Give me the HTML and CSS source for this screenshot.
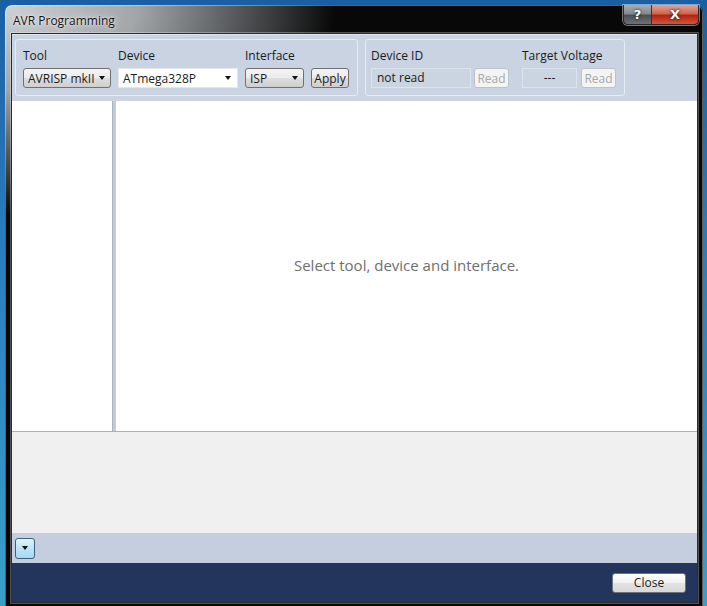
FILE: index.html
```html
<!DOCTYPE html>
<html lang="en">
<head>
  <meta charset="utf-8">
  <title>AVR Programming</title>
  <link rel="stylesheet" href="styles.css">
</head>
<body>
  <div class="window">
    <div class="titlebar">
      <span class="caption">AVR Programming</span>
      <div class="caption-buttons">
        <span class="cap-btn help">?</span>
        <span class="cap-btn close">X</span>
      </div>
    </div>
    <div class="client">
      <div class="toolbar">
        <div class="group">
          <div class="field">
            <label>Tool</label>
            <div class="combo gray tool-combo"><span>AVRISP mkII</span><i class="arrow"></i></div>
          </div>
          <div class="field">
            <label>Device</label>
            <div class="combo white device-combo"><span>ATmega328P</span><i class="arrow"></i></div>
          </div>
          <div class="field">
            <label>Interface</label>
            <div class="combo gray iface-combo"><span>ISP</span><i class="arrow"></i></div>
          </div>
          <div class="field end">
            <button type="button" class="btn apply">Apply</button>
          </div>
        </div>
        <div class="group">
          <div class="field">
            <label>Device ID</label>
            <div class="row">
              <div class="readout id-box">not read</div>
              <button type="button" class="btn disabled">Read</button>
            </div>
          </div>
          <div class="field voltage">
            <label>Target Voltage</label>
            <div class="row">
              <div class="readout volt-box">---</div>
              <button type="button" class="btn disabled">Read</button>
            </div>
          </div>
        </div>
      </div>
      <div class="main">
        <div class="sidebar"></div>
        <div class="splitter"></div>
        <div class="content">Select tool, device and interface.</div>
      </div>
      <div class="output"></div>
      <div class="expander">
        <span class="expand-btn"><i class="arrow"></i></span>
      </div>
      <div class="footer">
        <button type="button" class="btn close-btn">Close</button>
      </div>
    </div>
  </div>
</body>
</html>
```

FILE: styles.css
```css
html, body
{
  margin: 0;
  height: 100%;
}
body
{
  background: linear-gradient(180deg, #1b5fa3 0%, #2a7dbd 40%, #3a9fc8 100%);
  padding: 5px 4px 3px 5px;
  box-sizing: border-box;
  font-family: "Open Sans", "Noto Sans", sans-serif;
  font-size: 11.5px;
  color: #1b1b1b;
}
.window
{
  height: 598px;
  display: flex;
  flex-direction: column;
  border-radius: 7px 7px 3px 3px;
  background:
    radial-gradient(330px 210px at 0 0, #cfd2d4 0%, #a3a6a9 40%, #3d3f41 80%, rgba(0,0,0,0) 100%),
    #080808;
  box-shadow: inset 0 0 0 1px rgba(255,255,255,0.35);
  padding: 0 5px 5px 6px;
}
.titlebar
{
  height: 28px;
  display: flex;
  align-items: flex-start;
  justify-content: space-between;
}
.caption
{
  margin: 7px 0 0 2px;
  font-size: 12px;
  color: #111;
  text-shadow: 0 0 6px rgba(255,255,255,0.9), 0 0 2px rgba(255,255,255,0.8);
}
.caption-buttons
{
  display: flex;
  margin-right: -1px;
  border: 1px solid #2a2a2a;
  border-top: none;
  border-radius: 0 0 5px 5px;
  overflow: hidden;
  box-shadow: 0 0 0 1px rgba(255,255,255,0.45);
}
.cap-btn
{
  height: 19px;
  display: flex;
  align-items: center;
  justify-content: center;
  color: #fff;
  font-family: "DejaVu Sans", sans-serif;
  font-weight: bold;
  font-size: 13px;
  text-shadow: 0 0 3px #000;
}
.help
{
  width: 27px;
  background: linear-gradient(180deg, #a9adb1 0%, #868a8f 45%, #4c5056 55%, #6e7277 100%);
  border-right: 1px solid #333;
}
.close
{
  width: 46px;
  background: linear-gradient(180deg, #e5a293 0%, #d06750 45%, #b3260f 55%, #d2553d 100%);
}
.client
{
  flex: 1;
  display: flex;
  flex-direction: column;
  border: 1px solid #2c2c2c;
  box-shadow: 0 0 0 1px rgba(255,255,255,0.3);
  background: #f0f0f0;
}
.toolbar
{
  height: 67px;
  box-sizing: border-box;
  padding: 4px 0 0 3px;
  display: flex;
  gap: 7px;
  align-items: flex-start;
  background: #c9d3e2;
  border-top: 1px solid #dfe6ef;
}
.group
{
  display: flex;
  gap: 7px;
  padding: 8px 8px 7px 7px;
  border: 1px solid #e6ecf3;
  border-radius: 3px;
}
.group + .group
{
  padding-left: 5px;
  gap: 13px;
}
.field
{
  display: flex;
  flex-direction: column;
  gap: 4px;
}
.field.end
{
  justify-content: flex-end;
}
.field label
{
  height: 16px;
  line-height: 16px;
  font-size: 12px;
}
.row
{
  display: flex;
  gap: 3px;
}
.voltage .row
{
  gap: 4px;
}
.combo
{
  height: 20px;
  box-sizing: border-box;
  display: flex;
  align-items: center;
  justify-content: space-between;
  padding: 0 5px 0 4px;
  border-radius: 3px;
  font-size: 12px;
}
.combo.gray
{
  border: 1px solid #707070;
  background: linear-gradient(180deg, #f4f4f4 0%, #ebebeb 50%, #dddddd 51%, #cfcfcf 100%);
}
.combo.white
{
  background: #fff;
  border: 1px solid #e2e7ee;
  border-radius: 0;
  padding-right: 6px;
}
.tool-combo { width: 88px; }
.device-combo { width: 120px; }
.iface-combo { width: 59px; }
.arrow
{
  width: 0;
  height: 0;
  border-left: 3.5px solid transparent;
  border-right: 3.5px solid transparent;
  border-top: 4px solid #111;
}
.btn
{
  height: 20px;
  box-sizing: border-box;
  padding: 0;
  font-family: inherit;
  font-size: 12px;
  color: #1b1b1b;
  border: 1px solid #707070;
  border-radius: 3px;
  background: linear-gradient(180deg, #f4f4f4 0%, #ebebeb 50%, #dddddd 51%, #cfcfcf 100%);
}
.apply
{
  width: 38px;
}
.btn.disabled
{
  width: 35px;
  color: #a8a8a8;
  border-color: #bcc2c8;
  background: #f4f4f4;
}
.readout
{
  height: 20px;
  box-sizing: border-box;
  line-height: 18px;
  font-size: 12px;
  border: 1px solid #dde3ec;
  background: #cbd4e1;
}
.id-box
{
  width: 100px;
  padding-left: 5px;
}
.volt-box
{
  width: 55px;
  text-align: center;
}
.main
{
  height: 330px;
  display: flex;
  background: #fff;
  border-bottom: 1px solid #a9b1bc;
}
.sidebar
{
  width: 100px;
}
.splitter
{
  width: 3px;
  background: #c3cbd7;
  border-left: 1px solid #aab3c0;
}
.content
{
  flex: 1;
  display: flex;
  align-items: center;
  justify-content: center;
  font-size: 15px;
  color: #6f6f6f;
  padding-bottom: 2px;
}
.output
{
  height: 101px;
  background: #f0f0f0;
}
.expander
{
  height: 30px;
  display: flex;
  align-items: center;
  padding-left: 3px;
  background: #c4cedf;
}
.expand-btn
{
  width: 20px;
  height: 21px;
  box-sizing: border-box;
  display: flex;
  align-items: center;
  justify-content: center;
  border: 1px solid #3f5f7f;
  border-radius: 3px;
  background: linear-gradient(180deg, #e2f3fc 0%, #bde3f8 50%, #a7d7f3 100%);
}
.footer
{
  flex: 1;
  display: flex;
  align-items: center;
  justify-content: flex-end;
  padding-right: 11px;
  background: #23355a;
}
.close-btn
{
  width: 74px;
  height: 20px;
  border-color: #6c7480;
  background: linear-gradient(180deg, #ffffff 0%, #f1f1f1 50%, #e3e3e3 51%, #d8d8d8 100%);
}
```
